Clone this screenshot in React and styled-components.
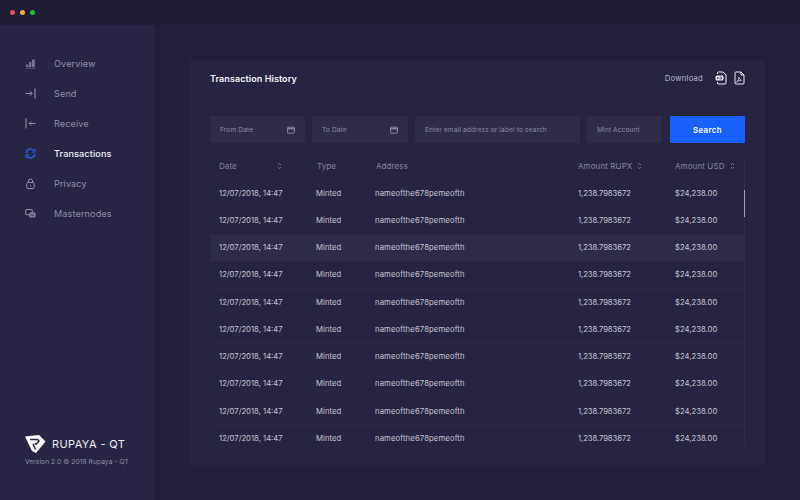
import React from 'react';
import styled, { createGlobalStyle } from 'styled-components';

const Global = createGlobalStyle`
  html, body { margin: 0; padding: 0; background: #221f3b; }
  * { box-sizing: border-box; }
  body { font-family: Inter, "Liberation Sans", sans-serif; }
`;
const Page = styled.div`width: 800px; height: 500px; overflow: hidden; display: flex; flex-direction: column; background: #221f3b;`;
const TitleBar = styled.div`height: 25px; flex: none; background: #1f1c36; display: flex; align-items: center; gap: 5px; padding: 0 0 0 10px;`;
const Dot = styled.span`width: 5px; height: 5px; border-radius: 50%; background: ${p => p.$c};`;
const Body = styled.div`flex: 1; display: flex; min-height: 0;`;
const Sidebar = styled.aside`width: 155px; flex: none; background: #272543; padding: 23px 0 34px 25px; display: flex; flex-direction: column; justify-content: space-between;`;
const Nav = styled.nav`display: flex; flex-direction: column;`;
const NavItem = styled.div`height: 30px; display: flex; align-items: center; gap: 18px; font-size: 9.1px; letter-spacing: .12px; color: ${p => p.$active ? '#f2f2f7' : '#918fa8'}; font-weight: ${p => p.$active ? 500 : 400};`;
const NavIcon = styled.svg`width: 11px; height: 11px; flex: none; fill: none; stroke: ${p => p.$active ? '#2c57c9' : '#8f8da5'}; stroke-width: 1;`;
const Brand = styled.div`display: flex; flex-direction: column; gap: 5px;`;
const BrandRow = styled.div`display: flex; align-items: center; gap: 6px; font-size: 11px; letter-spacing: .4px; color: #eeeef4;`;
const Version = styled.div`font-size: 6.7px; letter-spacing: .05px; color: #8f8da5;`;
const Main = styled.main`flex: 1; padding: 35px;`;
const Card = styled.section`height: 405px; background: #272441; display: flex; flex-direction: column;`;
const CardHead = styled.header`height: 37px; flex: none; padding: 0 20px; display: flex; align-items: center; justify-content: space-between; border-bottom: 1px solid #2b2846;`;
const Title = styled.h1`margin: 0; font-size: 9px; font-weight: 600; letter-spacing: .08px; color: #f4f4f8;`;
const Download = styled.div`display: flex; align-items: center; font-size: 7.7px; letter-spacing: .22px; color: #b9b8c8;`;
const FileIcon = styled.svg`width: 12px; height: 14px; margin-left: ${p => p.$first ? '12px' : '6px'}; fill: none; stroke: #eeeef4; stroke-width: 1;`;
const Filters = styled.div`margin: 19px 20px 0; height: 27px; flex: none; display: flex; gap: 7px;`;
const Field = styled.div`width: ${p => p.$w}px; flex: none; background: #2f2c49; border-radius: 1px; padding: 0 10px; display: flex; align-items: center; justify-content: space-between; font-size: 6.6px; letter-spacing: .12px; color: #8d8ba3;`;
const CalIcon = styled.svg`width: 8px; height: 8px; fill: none; stroke: #9694aa; stroke-width: .9;`;
const SearchButton = styled.button`width: 75px; margin-left: 1px; border: 0; border-radius: 1px; background: #1860fb; color: #fff; font: 600 7.8px Inter, sans-serif; letter-spacing: .4px;`;
const TableWrap = styled.div`margin: 10px 20px 0; height: 292px; position: relative; overflow: hidden;`;
const Track = styled.div`position: absolute; right: 0; top: 8px; bottom: 0; width: 1px; background: #302d4a;`;
const Thumb = styled.div`position: absolute; right: -.5px; top: 37px; width: 2px; height: 27px; background: #a9a8bb;`;
const gridCols = '98px 59px 202px 97px 1fr';
const Head = styled.div`height: 27px; display: grid; grid-template-columns: ${gridCols}; padding-left: 9px; align-items: center; font-size: 8px; letter-spacing: .1px; color: #85839b; border-bottom: 1px solid #2c2947;`;
const HeadCell = styled.div`display: flex; align-items: center; gap: ${p => p.$gap || 5}px;`;
const Sort = styled.svg`width: 5px; height: 8px; fill: none; stroke: #85839b; stroke-width: .8;`;
const Row = styled.div`height: 27.25px; display: grid; grid-template-columns: ${gridCols}; padding-left: 9px; align-items: center; font-size: 7.7px; color: #c5c4d2; border-bottom: 1px solid #2c2947; background: ${p => p.$hl ? '#2e2b49' : 'transparent'};`;
const Cell = styled.div`white-space: nowrap; margin-left: ${p => p.$nudge || 0}px; letter-spacing: ${p => p.$ls || 0}px;`;
const LogoMark = styled.svg`width: 21px; height: 18px; flex: none;`;

const icons = {
  bars: <g fill="#77758f" stroke="none"><path d="M1 10.500h9.500v-.6H1zM1 9.300h2.400V6.500H1zM4 9.300h2.400V4H4zM7 9.300h2.800V1.500H7z" /></g>,
  send: <><path d="M.5 5.500h6.500M5 3.300l2.200 2.200L5 7.700" /><path d="M10 .5v10" strokeWidth="1.200" /></>,
  recv: <><path d="M1 .5v10" strokeWidth="1.200" /><path d="M10.500 5.500H4M6.200 3.300L4 5.500l2.200 2.200" /></>,
  sync: <><path d="M1.200 5A4.200 4.200 0 0 1 9 3.200M9.800 6A4.200 4.200 0 0 1 2 7.800" strokeWidth="1.800" /><path d="M10 .8v3.400H6.800M1 10.200V6.800h3.200" strokeWidth="1.200" /></>,
  lock: <><rect x="1.800" y="4.500" width="7.400" height="6" rx="1" /><path d="M3.500 4.500V3a2 2 0 0 1 4 0v1.500M5.500 6.800v1.700" /></>,
  nodes: <><rect x=".7" y="1.500" width="6.500" height="5.200" rx="1" strokeWidth="1.100" /><rect x="4.300" y="4.500" width="6.200" height="5" rx="1" fill="#8f8da5" stroke="none" /><path d="M5.500 6.200h3.800M5.500 7.800h3.800" stroke="#272543" strokeWidth=".7" /></>,
};
const nav = [['Overview', 'bars'], ['Send', 'send'], ['Receive', 'recv'], ['Transactions', 'sync'], ['Privacy', 'lock'], ['Masternodes', 'nodes']];

const Cal = () => <CalIcon viewBox="0 0 8 8"><rect x=".6" y="1.200" width="6.800" height="6" rx=".5" /><path d="M.6 2.800h6.800" strokeWidth="1.200" /></CalIcon>;
const SortIcon = () => <Sort viewBox="0 0 5 8"><path d="M1 3l1.500-1.700L4 3M1 5l1.500 1.700L4 5" /></Sort>;

export default function App() {
  return (
    <Page>
      <Global />
      <TitleBar><Dot $c="#e5505f" /><Dot $c="#f0b429" /><Dot $c="#22c433" /></TitleBar>
      <Body>
        <Sidebar>
          <Nav>
            {nav.map(([label, ic]) => (
              <NavItem key={label} $active={label === 'Transactions'}>
                <NavIcon viewBox="0 0 11 11" $active={label === 'Transactions'}>{icons[ic]}</NavIcon>
                {label}
              </NavItem>
            ))}
          </Nav>
          <Brand>
            <BrandRow>
              <LogoMark viewBox="0 0 21 18">
                <path fill="#fff" d="M0 1.500 14 0l6.500 6.500L11 18l-4-2z" />
                <path fill="none" stroke="#272543" strokeWidth="1.500" d="M5 4.500h7.500l1.500 1.500-2.500 3H9.500M8 9l2.500 5.500" />
              </LogoMark>
              RUPAYA - QT
            </BrandRow>
            <Version>Version 2.0 © 2018 Rupaya - QT</Version>
          </Brand>
        </Sidebar>
        <Main>
          <Card>
            <CardHead>
              <Title>Transaction History</Title>
              <Download>
                Download
                <FileIcon $first viewBox="0 0 12 14"><path d="M2.500 3V2a1 1 0 0 1 1-1H8l3 3v8a1 1 0 0 1-1 1H3.500a1 1 0 0 1-1-1v-1" /><rect x=".5" y="4.500" width="8" height="5" rx="1.500" fill="#eeeef4" stroke="none" /><path d="M2 6l1.500 2M3.500 6L2 8M5 6v2h1.500V6z" stroke="#272441" strokeWidth=".6" /></FileIcon>
                <FileIcon viewBox="0 0 12 14"><path d="M3 1h5l3 3v8a1 1 0 0 1-1 1H3a1 1 0 0 1-1-1V2a1 1 0 0 1 1-1zM8 1v3h3" /><path d="M3.500 11c1.500-1 2.500-3 2.400-5 .3 2 1.200 3 2.600 3.400-1.600 0-3.500.4-5 1.600z" strokeWidth=".7" /></FileIcon>
              </Download>
            </CardHead>
            <Filters>
              <Field $w={95}>From Date<Cal /></Field>
              <Field $w={96}>To Date<Cal /></Field>
              <Field $w={165}>Enter email address or label to search</Field>
              <Field $w={75}>Mint Account</Field>
              <SearchButton>Search</SearchButton>
            </Filters>
            <TableWrap>
              <Head>
                <HeadCell $gap={40}>Date<SortIcon /></HeadCell>
                <HeadCell>Type</HeadCell>
                <HeadCell>Address</HeadCell>
                <HeadCell>Amount RUPX<SortIcon /></HeadCell>
                <HeadCell>Amount USD<SortIcon /></HeadCell>
              </Head>
              {Array.from({ length: 10 }, (_, i) => (
                <Row key={i} $hl={i === 2}>
                  <Cell>12/07/2018, 14:47</Cell>
                  <Cell $nudge={-1} $ls={.05}>Minted</Cell>
                  <Cell $nudge={-1} $ls={.12}>nameofthe678pemeofth</Cell>
                  <Cell $ls={-.08}>1,238.7983672</Cell>
                  <Cell $ls={.02}>$24,238.00</Cell>
                </Row>
              ))}
              <Track />
              <Thumb />
            </TableWrap>
          </Card>
        </Main>
      </Body>
    </Page>
  );
}
